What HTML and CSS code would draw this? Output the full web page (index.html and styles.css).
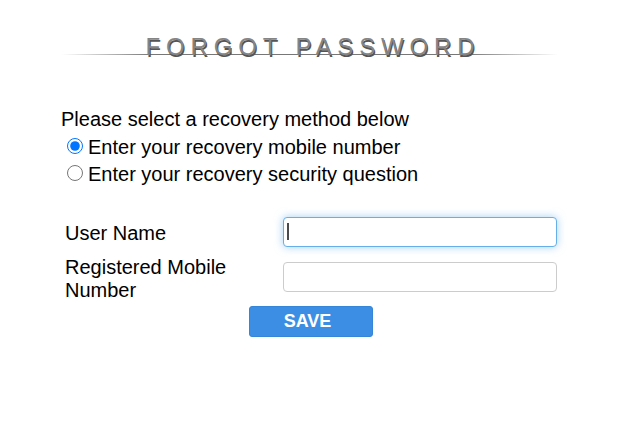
FILE: index.html
```html
<!DOCTYPE html>
<html>
<head>
<meta charset="utf-8">
<link rel="stylesheet" href="styles.css">
</head>
<body>
<div class="page">
  <h1 class="title"><span class="title-text">FORGOT PASSWORD</span></h1>
  <div class="method">
    <p class="prompt">Please select a recovery method below</p>
    <label class="option"><input type="radio" name="method" checked>Enter your recovery mobile number</label>
    <label class="option"><input type="radio" name="method">Enter your recovery security question</label>
  </div>
  <form class="form">
    <label class="field-label label-user" for="user">User Name</label>
    <div class="input-wrap input-user">
      <input class="field-input focused" id="user" type="text">
      <span class="caret"></span>
    </div>
    <label class="field-label label-mobile" for="mobile">Registered Mobile Number</label>
    <input class="field-input input-mobile" id="mobile" type="text">
    <div class="actions"><button type="button" class="save">SAVE</button></div>
  </form>
</div>
</body>
</html>
```

FILE: styles.css
```css
html, body {
  margin: 0;
  padding: 0;
  background: #fff;
}
body {
  margin: 8px;
  font-family: "Liberation Sans", Arial, sans-serif;
  color: #000;
}
.page {
  width: 619px;
}
.title {
  margin: 24px 0 0 54px;
  width: 496px;
  height: 30px;
  padding: 0;
  font-weight: normal;
  font-size: 24px;
  line-height: 30px;
  text-align: center;
  background-image: linear-gradient(to right, rgba(120,120,120,0), #777 18%, #777 82%, rgba(120,120,120,0));
  background-size: 100% 1px;
  background-position: 0 22px;
  background-repeat: no-repeat;
}
.title-text {
  display: inline-block;
  padding-left: 6px;
  letter-spacing: 5.85px;
  color: #858585;
  text-shadow: 1px 2px 0 #555;
}
.method {
  margin: 45px 0 0 53px;
}
.prompt {
  margin: 0 0 3px 0;
  font-size: 20px;
  line-height: 24px;
}
.option {
  display: block;
  font-size: 20px;
  line-height: 27px;
  height: 27px;
}
.option input {
  width: 16px;
  height: 16px;
  margin: 0 5px 0 6px;
  vertical-align: baseline;
}
.form {
  display: grid;
  grid-template-columns: 218px 274px;
  margin: 29px 0 0 57px;
  width: 492px;
}
.field-label {
  font-size: 20px;
  line-height: 23px;
}
.label-user {
  margin-top: 5px;
}
.input-wrap {
  position: relative;
  height: 30px;
}
.input-user {
  margin-bottom: 9px;
}
.input-mobile {
  margin-top: 6px;
}
.field-input {
  display: block;
  box-sizing: border-box;
  width: 274px;
  height: 30px;
  border: 1px solid #ccc;
  border-radius: 4px;
  padding: 4px 8px;
  font-family: "Liberation Sans", Arial, sans-serif;
  font-size: 16px;
  color: #333;
  outline: none;
  background: #fff;
}
.focused {
  border-color: #66afe9;
  box-shadow: 0 0 8px rgba(102, 175, 233, 0.6);
}
.caret {
  position: absolute;
  left: 4px;
  top: 6px;
  width: 2px;
  height: 17px;
  background: #4a4a4a;
}
.actions {
  grid-column: 1 / 3;
  display: flex;
  justify-content: center;
  padding-top: 4px;
}
.save {
  box-sizing: border-box;
  width: 124px;
  height: 31px;
  border: 1px solid #3585d8;
  border-radius: 3px;
  background: #3c8ee4;
  color: #fff;
  font-family: "Liberation Sans", Arial, sans-serif;
  font-weight: bold;
  font-size: 18px;
  padding: 0 7px 0 0;
  line-height: 29px;
}
```
